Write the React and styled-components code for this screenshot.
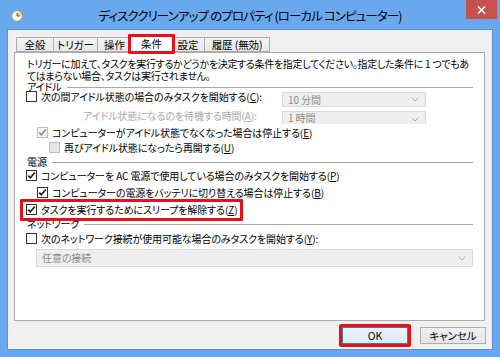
import React from "react";
import styled, { createGlobalStyle } from "styled-components";

const FONT = `"Noto Sans CJK JP", "Noto Sans CJK SC", "Noto Sans", sans-serif`;
const RED = "#e8101a";

const Global = createGlobalStyle`
  html, body { margin: 0; padding: 0; }
  body { width: 500px; height: 357px; overflow: hidden; background: #6aa8ee; }
`;

const Window = styled.div`
  width: 500px;
  height: 357px;
  box-sizing: border-box;
  background: #6aa8ee;
  display: flex;
  flex-direction: column;
  font-family: ${FONT};
  font-feature-settings: "palt";
  color: #000;
  font-size: 10px;
  letter-spacing: -0.1px;
`;

const TitleBar = styled.div`
  height: 29px;
  display: grid;
  grid-template-columns: 60px 1fr 60px;
  align-items: start;
`;

const AppIcon = styled.svg`
  margin: 10px 0 0 11px;
  display: block;
`;

const Title = styled.div`
  text-align: center;
  font-size: 12.5px;
  letter-spacing: -0.9px;
  line-height: 15px;
  padding-top: 8px;
  white-space: nowrap;
  color: #000;
`;

const Close = styled.div`
  justify-self: end;
  margin-right: 3px;
  width: 31px;
  height: 19px;
  background: #c75050;
  display: flex;
  align-items: center;
  justify-content: center;
`;

const Client = styled.div`
  flex: 1;
  margin: 0 7px 7px;
  border: 1px solid #5b95d8;
  background: #f0f0f0;
  display: flex;
  flex-direction: column;
  padding: 4px 7px 0 6px;
`;

const TabStrip = styled.div`
  height: 18px;
  display: flex;
  align-items: flex-end;
  padding-left: 2px;
`;

const Tab = styled.div`
  position: relative;
  box-sizing: border-box;
  width: ${(p) => p.$w}px;
  height: ${(p) => (p.$active ? 19 : 15)}px;
  margin-left: ${(p) => (p.$active ? -3 : -1)}px;
  margin-right: ${(p) => (p.$active ? -2 : 0)}px;
  margin-bottom: ${(p) => (p.$active ? -1 : 0)}px;
  z-index: ${(p) => (p.$active ? 2 : 1)};
  border: 1px solid #acacac;
  border-bottom: ${(p) => (p.$active ? "none" : "1px solid #acacac")};
  background: ${(p) => (p.$active ? "#fff" : "linear-gradient(#f3f3f3, #e8e8e8)")};
  display: flex;
  align-items: center;
  justify-content: center;
  font-size: 10.5px;
  line-height: 12px;
  white-space: nowrap;
  padding-top: ${(p) => (p.$active ? 0 : 1)}px;
  &:first-child { margin-left: 0; }
  ${(p) =>
    p.$mark &&
    `&::after {
      content: "";
      position: absolute;
      left: -2px; top: -1px; right: -2px; bottom: -1px;
      border: 3px solid ${RED};
      border-radius: 1px;
    }`}
`;

const Panel = styled.div`
  height: 269px;
  box-sizing: border-box;
  border: 1px solid #acacac;
  background: #fff;
  padding: 5px 11px 0 11px;
  display: flex;
  flex-direction: column;
`;

const Desc = styled.div`
  line-height: 12px;
  margin-left: 1px;
  letter-spacing: -0.3px;
  white-space: nowrap;
`;

const Heading = styled.div`
  display: flex;
  align-items: center;
  height: 12px;
  line-height: 12px;
  margin-top: ${(p) => p.$mt}px;
  padding-left: 1px;
  &::after {
    content: "";
    flex: 1;
    height: 1px;
    background: #a8a8a8;
    margin-left: 5px;
  }
`;

const OptionRow = styled.div`
  display: grid;
  grid-template-columns: 256px 144px;
  align-items: start;
  height: ${(p) => p.$h}px;
  margin-top: ${(p) => p.$mt}px;
`;

const CheckRow = styled.div`
  position: relative;
  display: flex;
  align-items: center;
  align-self: flex-start;
  height: 11px;
  margin-top: ${(p) => p.$mt}px;
  margin-left: ${(p) => p.$indent || 0}px;
  ${(p) =>
    p.$mark &&
    `&::after {
      content: "";
      position: absolute;
      left: -6px; top: -5px; right: -6px; bottom: -6px;
      border: 3px solid ${RED};
      border-radius: 1px;
    }`}
`;

const Box = styled.span`
  box-sizing: border-box;
  width: 11px;
  height: 11px;
  flex: none;
  border: 1px solid ${(p) => (p.$disabled ? "#bdbdbd" : "#333")};
  background: ${(p) => (p.$disabled && !p.$checked ? "#e6e6e6" : p.$disabled ? "#f4f4f4" : "#fff")};
  display: flex;
  align-items: center;
  justify-content: center;
`;

const Label = styled.span`
  margin-left: 4px;
  line-height: 11px;
  white-space: nowrap;
  color: ${(p) => (p.$disabled ? "#a0a0a0" : "#000")};
`;

const WaitLabel = styled.span`
  margin-left: 57px;
  line-height: 12px;
  white-space: nowrap;
  color: #a8a8a8;
`;

const Select = styled.div`
  box-sizing: border-box;
  height: ${(p) => p.$h}px;
  margin-top: ${(p) => p.$mt || 0}px;
  margin-left: ${(p) => p.$ml || 0}px;
  border: 1px solid #d9d9d9;
  border-bottom: ${(p) => (p.$clip ? "none" : "1px solid #d9d9d9")};
  background: #efefef;
  color: #8a8a8a;
  display: flex;
  align-items: ${(p) => (p.$clip ? "flex-start" : "center")};
  justify-content: space-between;
  padding: 0 6px 0 5px;
  line-height: 12px;
  overflow: hidden;
  white-space: nowrap;
`;

const Chevron = styled.svg`
  display: block;
  flex: none;
  margin-top: ${(p) => p.$mt || 0}px;
`;

const ButtonRow = styled.div`
  display: flex;
  justify-content: flex-end;
  gap: 12px;
  margin-top: 6px;
  margin-right: -1px;
`;

const Button = styled.div`
  position: relative;
  box-sizing: border-box;
  width: 66px;
  height: 17px;
  border: 1px solid ${(p) => (p.$default ? "#3c7fb1" : "#adadad")};
  background: ${(p) => (p.$default ? "linear-gradient(#eaf4fc, #dcecfc)" : "linear-gradient(#f0f0f0, #e5e5e5)")};
  display: flex;
  align-items: center;
  justify-content: center;
  font-size: 10.5px;
  line-height: 12px;
  ${(p) =>
    p.$mark &&
    `&::after {
      content: "";
      position: absolute;
      left: -4px; top: -4px; right: -4px; bottom: -4px;
      border: 3px solid ${RED};
      border-radius: 2px;
    }`}
`;

const Underline = styled.span`
  text-decoration: underline;
`;

function Check({ checked, disabled }) {
  return (
    <Box $checked={checked} $disabled={disabled}>
      {checked && (
        <svg width="9" height="9" viewBox="0 0 9 9">
          <path d="M1.2 4.6 L3.4 6.8 L7.8 1.6" fill="none" stroke={disabled ? "#8a8a8a" : "#1a1a1a"} strokeWidth="1.6" />
        </svg>
      )}
    </Box>
  );
}

function Caret({ mt }) {
  return (
    <Chevron $mt={mt} width="8" height="5" viewBox="0 0 8 5">
      <path d="M0.5 0.5 L4 4 L7.5 0.5" fill="none" stroke="#a8a8a8" strokeWidth="1" />
    </Chevron>
  );
}

const tabs = [
  { t: "全般", w: 38 },
  { t: "トリガー", w: 45 },
  { t: "操作", w: 35 },
  { t: "条件", w: 45, active: true },
  { t: "設定", w: 34 },
  { t: "履歴 (無効)", w: 66 },
];

export default function App() {
  return (
    <>
      <Global />
      <Window>
        <TitleBar>
          <AppIcon width="12" height="12" viewBox="0 0 12 12">
            <circle cx="6" cy="6" r="5.4" fill="#fbfbf4" stroke="#8a8a8a" strokeWidth="0.9" />
            <path d="M6 6 L6 2.2 A3.8 3.8 0 0 1 9.8 6 Z" fill="#f2c94c" />
            <path d="M6 6 L6 3 M6 6 L8.5 6" stroke="#555" strokeWidth="1" />
          </AppIcon>
          <Title>ディスククリーンアップ のプロパティ (ローカル コンピューター)</Title>
          <Close>
            <svg width="9" height="8" viewBox="0 0 9 8">
              <path d="M1 0.5 L8 7.5 M8 0.5 L1 7.5" stroke="#fff" strokeWidth="1.6" />
            </svg>
          </Close>
        </TitleBar>
        <Client>
          <TabStrip>
            {tabs.map((tab) => (
              <Tab key={tab.t} $w={tab.w} $active={tab.active} $mark={tab.active}>
                {tab.t}
              </Tab>
            ))}
          </TabStrip>
          <Panel>
            <Desc>
              トリガーに加えて、タスクを実行するかどうかを決定する条件を指定してください。指定した条件に 1 つでもあ
              <br />
              てはまらない場合、タスクは実行されません。
            </Desc>
            <Heading $mt={-1}>アイドル</Heading>
            <OptionRow $h={17} $mt={-2}>
              <CheckRow $mt={0}>
                <Check />
                <Label>
                  次の間アイドル状態の場合のみタスクを開始する(<Underline>C</Underline>):
                </Label>
              </CheckRow>
              <Select $h={15} $mt={1}>
                10 分間
                <Caret />
              </Select>
            </OptionRow>
            <OptionRow $h={12} $mt={2}>
              <WaitLabel>
                アイドル状態になるのを待機する時間(<Underline>A</Underline>):
              </WaitLabel>
              <Select $h={13} $mt={1} $clip>
                1 時間
                <Caret mt={5} />
              </Select>
            </OptionRow>
            <CheckRow $mt={5} $indent={11}>
              <Check checked disabled />
              <Label>
                コンピューターがアイドル状態でなくなった場合は停止する(<Underline>E</Underline>)
              </Label>
            </CheckRow>
            <CheckRow $mt={4} $indent={23}>
              <Check disabled />
              <Label>
                再びアイドル状態になったら再開する(<Underline>U</Underline>)
              </Label>
            </CheckRow>
            <Heading $mt={3}>電源</Heading>
            <CheckRow $mt={2}>
              <Check checked />
              <Label>
                コンピューターを AC 電源で使用している場合のみタスクを開始する(<Underline>P</Underline>)
              </Label>
            </CheckRow>
            <CheckRow $mt={6} $indent={11}>
              <Check checked />
              <Label>
                コンピューターの電源をバッテリに切り替える場合は停止する(<Underline>B</Underline>)
              </Label>
            </CheckRow>
            <CheckRow $mt={6} $mark>
              <Check checked />
              <Label>
                タスクを実行するためにスリープを解除する(<Underline>Z</Underline>)
              </Label>
            </CheckRow>
            <Heading $mt={3}>ネットワーク</Heading>
            <CheckRow $mt={3}>
              <Check />
              <Label>
                次のネットワーク接続が使用可能な場合のみタスクを開始する(<Underline>Y</Underline>):
              </Label>
            </CheckRow>
            <Select $h={18} $mt={5} $ml={10}>
              任意の接続
              <Caret />
            </Select>
          </Panel>
          <ButtonRow>
            <Button $default $mark>OK</Button>
            <Button>キャンセル</Button>
          </ButtonRow>
        </Client>
      </Window>
    </>
  );
}
